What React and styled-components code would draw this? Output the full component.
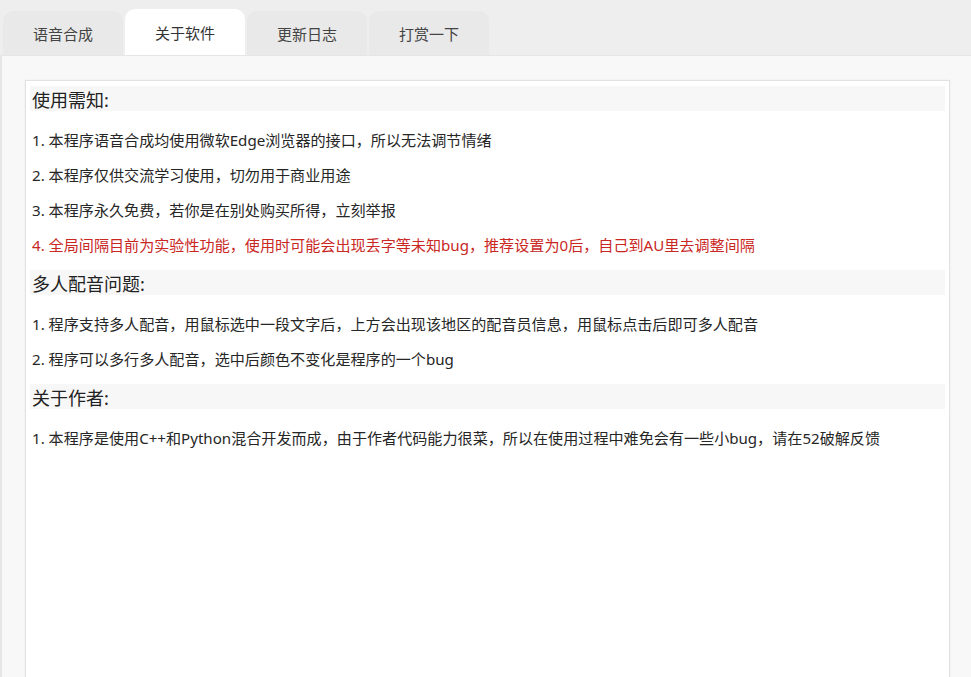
import React from "react";
import styled, { createGlobalStyle } from "styled-components";

const Global = createGlobalStyle`
  html, body { margin: 0; padding: 0; background: #eeeeee; }
  body { font-family: "Noto Sans", "Noto Sans CJK SC", sans-serif; overflow: hidden; }
  #root { height: 100vh; }
`;

const Page = styled.div`
  display: flex;
  flex-direction: column;
  height: 100vh;
  overflow: hidden;
  background: #eeeeee;
`;

const TabBar = styled.div`
  display: flex;
  align-items: flex-end;
  gap: 2px;
  height: 55px;
  padding-left: 3px;
  flex-shrink: 0;
`;

const Tab = styled.div`
  width: 120px;
  height: ${(p) => (p.$active ? 46 : 44)}px;
  display: flex;
  align-items: center;
  justify-content: center;
  border-radius: 10px 10px 0 0;
  background: ${(p) => (p.$active ? "#ffffff" : "#e9e9e9")};
  color: ${(p) => (p.$active ? "#333333" : "#444444")};
  font-family: "Noto Sans CJK SC", sans-serif;
  font-size: 15px;
  padding-top: ${(p) => (p.$active ? 0 : 1)}px;
  box-sizing: border-box;
`;

const Pane = styled.div`
  flex: 1;
  background: #f8f8f8;
  border-top: 1px solid #e6e6e6;
  border-left: 2px solid #e6e6e6;
  padding: 24px 21px 0 23px;
  overflow: hidden;
`;

const Box = styled.div`
  background: #ffffff;
  border: 1px solid #e2e2e2;
  box-shadow: 0 0 2px rgba(0, 0, 0, 0.06);
  height: 640px;
  padding: 5px 4px 0 4px;
  box-sizing: border-box;
`;

const Heading = styled.div`
  height: 25px;
  display: flex;
  align-items: center;
  background: #f7f7f7;
  padding-left: 2px;
  margin-top: ${(p) => (p.$first ? 0 : 9)}px;
  margin-bottom: 10px;
  font-size: 18px;
  color: #222222;
`;

const Item = styled.div`
  height: 35px;
  display: flex;
  align-items: center;
  padding-left: 2px;
  font-size: 15.1px;
  color: ${(p) => (p.$warn ? "#c9271f" : "#262626")};
  white-space: nowrap;
`;

const sections = [
  {
    title: "使用需知:",
    items: [
      { t: "1. 本程序语音合成均使用微软Edge浏览器的接口，所以无法调节情绪" },
      { t: "2. 本程序仅供交流学习使用，切勿用于商业用途" },
      { t: "3. 本程序永久免费，若你是在别处购买所得，立刻举报" },
      {
        t: "4. 全局间隔目前为实验性功能，使用时可能会出现丢字等未知bug，推荐设置为0后，自己到AU里去调整间隔",
        warn: true,
      },
    ],
  },
  {
    title: "多人配音问题:",
    items: [
      { t: "1. 程序支持多人配音，用鼠标选中一段文字后，上方会出现该地区的配音员信息，用鼠标点击后即可多人配音" },
      { t: "2. 程序可以多行多人配音，选中后颜色不变化是程序的一个bug" },
    ],
  },
  {
    title: "关于作者:",
    items: [
      {
        t: "1. 本程序是使用C++和Python混合开发而成，由于作者代码能力很菜，所以在使用过程中难免会有一些小bug，请在52破解反馈",
      },
    ],
  },
];

const tabs = ["语音合成", "关于软件", "更新日志", "打赏一下"];

export default function App() {
  return (
    <Page>
      <Global />
      <TabBar>
        {tabs.map((t, i) => (
          <Tab key={t} $active={i === 1}>
            {t}
          </Tab>
        ))}
      </TabBar>
      <Pane>
        <Box>
          {sections.map((s, si) => (
            <React.Fragment key={s.title}>
              <Heading $first={si === 0}>{s.title}</Heading>
              {s.items.map((it) => (
                <Item key={it.t} $warn={it.warn}>
                  {it.t}
                </Item>
              ))}
            </React.Fragment>
          ))}
        </Box>
      </Pane>
    </Page>
  );
}
